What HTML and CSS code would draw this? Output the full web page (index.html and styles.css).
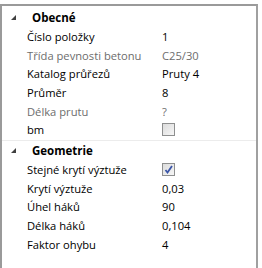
FILE: index.html
```html
<!DOCTYPE html>
<html>
<head>
    <title>Vlastnosti</title>
    <link rel="stylesheet" href="styles.css">
</head>
<body>
    <div class="grid">
        <div class="group">
            <div class="group-head">
                <svg class="arrow" width="5" height="5" viewBox="0 0 5 5"><polygon points="5,0 5,5 0,5" fill="#404040"/></svg>
                <span>Obecné</span>
            </div>
            <div class="row"><span class="name">Číslo položky</span><span class="value">1</span></div>
            <div class="row off"><span class="name">Třída pevnosti betonu</span><span class="value">C25/30</span></div>
            <div class="row"><span class="name">Katalog průřezů</span><span class="value">Pruty 4</span></div>
            <div class="row"><span class="name">Průměr</span><span class="value">8</span></div>
            <div class="row off"><span class="name">Délka prutu</span><span class="value">?</span></div>
            <div class="row"><span class="name">bm</span><span class="value"><span class="check"></span></span></div>
        </div>
        <div class="group">
            <div class="group-head">
                <svg class="arrow" width="5" height="5" viewBox="0 0 5 5"><polygon points="5,0 5,5 0,5" fill="#404040"/></svg>
                <span>Geometrie</span>
            </div>
            <div class="row"><span class="name">Stejné krytí výztuže</span><span class="value"><span class="check on"><svg width="9" height="9" viewBox="0 0 9 9"><path d="M1.5 5 L3.5 7.5 L8 1" fill="none" stroke="#3a55a8" stroke-width="1.8"/></svg></span></span></div>
            <div class="row"><span class="name">Krytí výztuže</span><span class="value">0,03</span></div>
            <div class="row"><span class="name">Úhel háků</span><span class="value">90</span></div>
            <div class="row"><span class="name">Délka háků</span><span class="value">0,104</span></div>
            <div class="row"><span class="name">Faktor ohybu</span><span class="value">4</span></div>
        </div>
    </div>
</body>
</html>
```

FILE: styles.css
```css
body {
    margin: 0;
    background-color: white;
    font-family: "Open Sans", "Noto Sans", sans-serif;
    font-size: 11.2px;
    color: #000;
}

.grid {
    margin-top: 4px;
    width: 258px;
    height: 264px;
    border-top: 2px solid #9a9a9a;
    border-left: 2px solid #9a9a9a;
    border-right: 2px solid #a0a0a0;
    box-sizing: border-box;
    padding-top: 2px;
}

.group {
    padding-bottom: 1px;
}

.group + .group {
    border-top: 1px solid #ececec;
}

.group-head {
    display: flex;
    align-items: center;
    height: 19px;
    font-weight: bold;
    font-size: 11.5px;
}

.arrow {
    margin-left: 9px;
    margin-right: 16px;
}

.row {
    display: flex;
    align-items: center;
    height: 18.7px;
}

.name {
    width: 160px;
    padding-left: 25px;
    box-sizing: border-box;
    white-space: nowrap;
    overflow: hidden;
}

.value {
    display: flex;
    align-items: center;
}

.off {
    color: #6d6d6d;
}

.check {
    display: inline-flex;
    align-items: center;
    justify-content: center;
    width: 11px;
    height: 11px;
    border: 1px solid #8e8f8f;
    background: linear-gradient(135deg, #dcdcdc, #f6f6f6);
}
```
